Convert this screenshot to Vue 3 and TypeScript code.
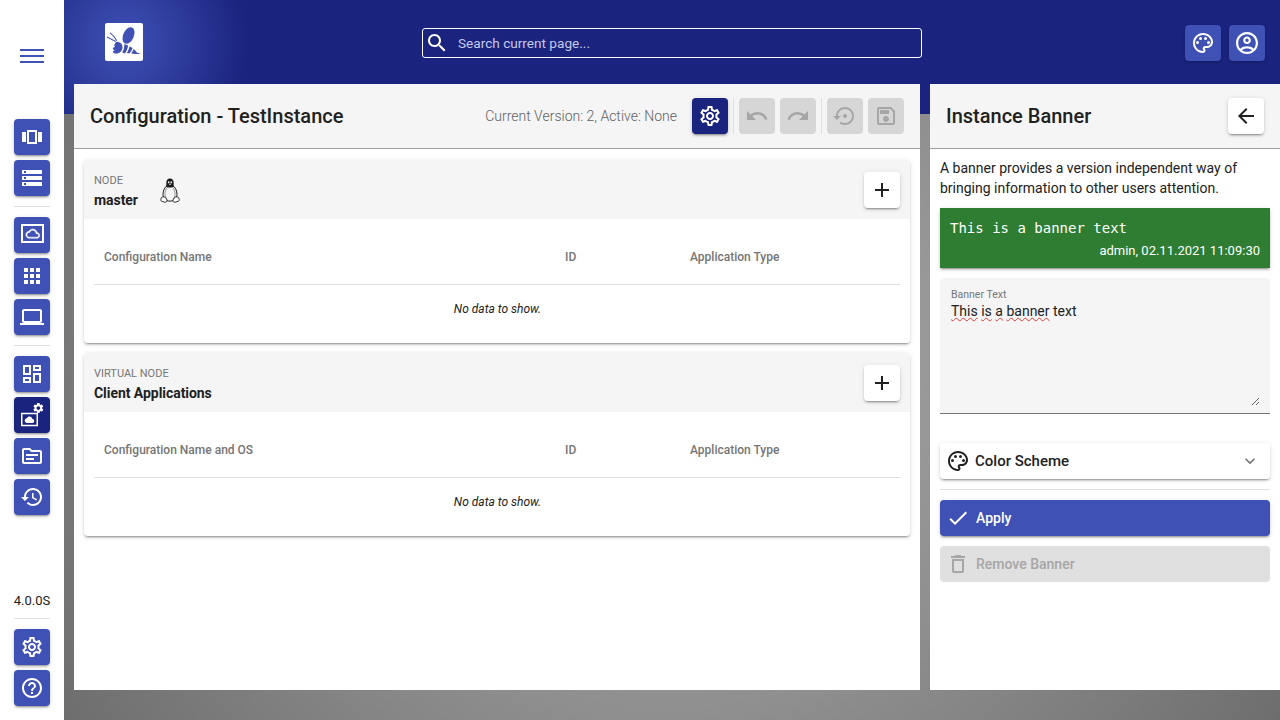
<script setup lang="ts">
import { h } from 'vue';

type Glyph = { d: string; t?: string; s?: number }[];

const Ico = (props: { g: Glyph; size?: number }) =>
  h(
    'svg',
    { viewBox: '0 0 24 24', width: props.size ?? 24, height: props.size ?? 24, fill: 'currentColor', style: 'display:block;flex:none' },
    props.g.map((p) => h('path', { d: p.d, transform: p.t, stroke: p.s ? 'currentColor' : undefined, 'stroke-width': p.s }))
  );
Ico.props = ['g', 'size'];

const gearD =
  'M19.43 12.98c.04-.32.07-.64.07-.98 0-.34-.03-.66-.07-.98l2.11-1.65c.19-.15.24-.42.12-.64l-2-3.46c-.09-.16-.26-.25-.44-.25-.06 0-.12.01-.17.03l-2.49 1c-.52-.4-1.08-.73-1.69-.98l-.38-2.65C14.46 2.18 14.25 2 14 2h-4c-.25 0-.46.18-.49.42l-.38 2.65c-.61.25-1.17.59-1.69.98l-2.49-1c-.06-.02-.12-.03-.18-.03-.17 0-.34.09-.43.25l-2 3.46c-.13.22-.07.49.12.64l2.11 1.65c-.04.32-.07.65-.07.98 0 .33.03.66.07.98l-2.11 1.65c-.19.15-.24.42-.12.64l2 3.46c.09.16.26.25.44.25.06 0 .12-.01.17-.03l2.49-1c.52.4 1.08.73 1.69.98l.38 2.65c.03.24.24.42.49.42h4c.25 0 .46-.18.49-.42l.38-2.65c.61-.25 1.17-.59 1.69-.98l2.49 1c.06.02.12.03.18.03.17 0 .34-.09.43-.25l2-3.46c.12-.22.07-.49-.12-.64l-2.11-1.65zm-1.98-1.71c.04.31.05.52.05.73 0 .21-.02.43-.05.73l-.14 1.13.89.7 1.08.84-.7 1.21-1.27-.51-1.04-.42-.9.68c-.43.32-.84.56-1.25.73l-1.06.43-.16 1.13-.2 1.35h-1.4l-.19-1.35-.16-1.13-1.06-.43c-.43-.18-.83-.41-1.23-.71l-.91-.7-1.06.43-1.27.51-.7-1.21 1.08-.84.89-.7-.14-1.13c-.03-.31-.05-.54-.05-.74s.02-.43.05-.73l.14-1.13-.89-.7-1.08-.84.7-1.21 1.27.51 1.04.42.9-.68c.43-.32.84-.56 1.25-.73l1.06-.43.16-1.13.2-1.35h1.39l.19 1.35.16 1.13 1.06.43c.43.18.83.41 1.23.71l.91.7 1.06-.43 1.27-.51.7 1.21-1.07.85-.89.7.14 1.13zM12 8c-2.21 0-4 1.79-4 4s1.79 4 4 4 4-1.79 4-4-1.79-4-4-4zm0 6c-1.1 0-2-.9-2-2s.9-2 2-2 2 .9 2 2-.9 2-2 2z';
const gearSolid =
  'M19.14 12.94c.04-.3.06-.61.06-.94 0-.32-.02-.64-.07-.94l2.03-1.58c.18-.14.23-.41.12-.61l-1.92-3.32c-.12-.22-.37-.29-.59-.22l-2.39.96c-.5-.38-1.03-.7-1.62-.94l-.36-2.54c-.04-.24-.24-.41-.48-.41h-3.84c-.24 0-.43.17-.47.41l-.36 2.54c-.59.24-1.13.57-1.62.94l-2.39-.96c-.22-.08-.47 0-.59.22L2.74 8.87c-.12.21-.08.47.12.61l2.03 1.58c-.05.3-.09.63-.09.94s.02.64.07.94l-2.03 1.58c-.18.14-.23.41-.12.61l1.92 3.32c.12.22.37.29.59.22l2.39-.96c.5.38 1.03.7 1.62.94l.36 2.54c.05.24.24.41.48.41h3.84c.24 0 .44-.17.47-.41l.36-2.54c.59-.24 1.13-.56 1.62-.94l2.39.96c.22.08.47 0 .59-.22l1.92-3.32c.12-.22.07-.47-.12-.61l-2.01-1.58zM12 15.6c-1.98 0-3.6-1.62-3.6-3.6s1.62-3.6 3.6-3.6 3.6 1.62 3.6 3.6-1.62 3.6-3.6 3.6z';
const cloudOutline =
  'M19.35 10.04C18.67 6.59 15.64 4 12 4 9.11 4 6.6 5.64 5.35 8.04 2.34 8.36 0 10.91 0 14c0 3.31 2.69 6 6 6h13c2.76 0 5-2.24 5-5 0-2.64-2.05-4.78-4.65-4.96zM19 18H6c-2.21 0-4-1.79-4-4s1.79-4 4-4h.71C7.37 7.69 9.48 6 12 6c3.04 0 5.5 2.46 5.5 5.5v.5H19c1.66 0 3 1.34 3 3s-1.34 3-3 3z';
const cloudFill =
  'M19.35 10.04C18.67 6.59 15.64 4 12 4 9.11 4 6.6 5.64 5.35 8.04 2.34 8.36 0 10.91 0 14c0 3.31 2.69 6 6 6h13c2.76 0 5-2.24 5-5 0-2.64-2.05-4.78-4.65-4.96z';
const paletteD =
  'M12 22C6.49 22 2 17.51 2 12S6.49 2 12 2s10 4.04 10 9c0 3.31-2.69 6-6 6h-1.77c-.28 0-.5.22-.5.5 0 .12.05.23.13.33.41.47.64 1.06.64 1.67 0 1.38-1.12 2.5-2.5 2.5zm0-18c-4.41 0-8 3.59-8 8s3.59 8 8 8c.28 0 .5-.22.5-.5 0-.16-.08-.28-.14-.35-.41-.46-.63-1.05-.63-1.65 0-1.38 1.12-2.5 2.5-2.5H16c2.21 0 4-1.79 4-4 0-3.86-3.59-7-8-7zM5 11.5a1.5 1.5 0 1 0 3 0a1.5 1.5 0 1 0-3 0zM8 7.5a1.5 1.5 0 1 0 3 0a1.5 1.5 0 1 0-3 0zM13 7.5a1.5 1.5 0 1 0 3 0a1.5 1.5 0 1 0-3 0zM16 11.5a1.5 1.5 0 1 0 3 0a1.5 1.5 0 1 0-3 0z';

const icons: Record<string, Glyph> = {
  carousel: [{ d: 'M2 7h4v10H2V7zm5 12h10V5H7v14zM9 7h6v10H9V7zm9 0h4v10h-4V7z' }],
  storage: [{ d: 'M2 20h20v-4H2v4zm2-3h2v2H4v-2zM2 4v4h20V4H2zm4 3H4V5h2v2zm-4 7h20v-4H2v4zm2-3h2v2H4v-2z' }],
  cloudBox: [
    { d: 'M1 1h23v19H1V1zm2 2v15h19V3H3z' },
    { d: cloudOutline, t: 'translate(5.8 3.7) scale(.58)', s: 0.8 }
  ],
  apps: [{ d: 'M4 8h4V4H4v4zm6 12h4v-4h-4v4zm-6 0h4v-4H4v4zm0-6h4v-4H4v4zm6 0h4v-4h-4v4zm6-10v4h4V4h-4zm-6 4h4V4h-4v4zm6 6h4v-4h-4v4zm0 6h4v-4h-4v4z' }],
  laptop: [{ d: 'M20 18c1.1 0 1.99-.9 1.99-2L22 6c0-1.1-.9-2-2-2H4c-1.1 0-2 .9-2 2v10c0 1.1.9 2 2 2H0v2h24v-2h-4zM4 6h16v10H4V6z' }],
  dashboard: [{ d: 'M19 5v2h-4V5h4M9 5v6H5V5h4m10 8v6h-4v-6h4M9 17v2H5v-2h4M21 3h-8v6h8V3zM11 3H3v10h8V3zm10 8h-8v10h8V11zm-10 4H3v6h8v-6z' }],
  config: [
    { d: 'M1 9.7h17v13.5H1V9.700zm1.500 1.500v10.500h14V11.200h-14z' },
    { d: cloudFill, t: 'translate(4.700 12) scale(.4)' },
    { d: gearSolid, t: 'translate(12.100 -1.200) scale(.52)' }
  ],
  topic: [{ d: 'M20 6h-8l-2-2H4c-1.1 0-2 .9-2 2v12c0 1.1.9 2 2 2h16c1.1 0 2-.9 2-2V8c0-1.1-.9-2-2-2zm0 12H4V6h5.170l2 2H20v10zm-6-2H6v-2h8v2zm4-4H6v-2h12v2z' }],
  history: [{ d: 'M13 3c-4.970 0-9 4.030-9 9H1l3.890 3.890.07.14L9 12H6c0-3.870 3.130-7 7-7s7 3.130 7 7-3.130 7-7 7c-1.930 0-3.680-.79-4.940-2.060l-1.420 1.420C8.270 19.990 10.510 21 13 21c4.970 0 9-4.030 9-9s-4.030-9-9-9zm-1 5v5l4.280 2.540.72-1.210-3.500-2.080V8H12z' }],
  gear: [{ d: gearD }],
  help: [{ d: 'M11 18h2v-2h-2v2zm1-16C6.480 2 2 6.480 2 12s4.480 10 10 10 10-4.480 10-10S17.520 2 12 2zm0 18c-4.410 0-8-3.590-8-8s3.590-8 8-8 8 3.590 8 8-3.590 8-8 8zm0-14c-2.210 0-4 1.790-4 4h2c0-1.100.9-2 2-2s2 .9 2 2c0 2-3 1.750-3 5h2c0-2.250 3-2.500 3-5 0-2.210-1.790-4-4-4z' }],
  palette: [{ d: paletteD }],
  account: [
    { d: 'M12 2C6.480 2 2 6.480 2 12s4.480 10 10 10 10-4.480 10-10S17.520 2 12 2zM7.350 18.500C8.660 17.560 10.260 17 12 17s3.340.56 4.650 1.500c-1.310.94-2.910 1.500-4.650 1.500s-3.340-.56-4.650-1.500zm10.790-1.380C16.450 15.800 14.320 15 12 15s-4.450.8-6.140 2.120C4.700 15.730 4 13.950 4 12c0-4.420 3.580-8 8-8s8 3.580 8 8c0 1.950-.7 3.730-1.860 5.120z', t: 'translate(-1.200 -1.200) scale(1.1)' },
    { d: 'M12 6c-1.930 0-3.500 1.570-3.500 3.500S10.070 13 12 13s3.500-1.570 3.500-3.500S13.930 6 12 6zm0 5c-.83 0-1.500-.67-1.500-1.500S11.170 8 12 8s1.500.67 1.500 1.500S12.830 11 12 11z', t: 'translate(-1.200 -1.200) scale(1.1)' }
  ],
  undo: [{ d: 'M12.500 8c-2.650 0-5.050.99-6.900 2.600L2 7v9h9l-3.620-3.620c1.390-1.160 3.160-1.880 5.120-1.880 3.540 0 6.550 2.310 7.600 5.500l2.370-.78C21.080 11.030 17.150 8 12.500 8z' }],
  redo: [{ d: 'M18.400 10.600C16.550 8.990 14.150 8 11.500 8c-4.650 0-8.580 3.030-9.960 7.220L3.900 16c1.050-3.190 4.050-5.500 7.600-5.500 1.950 0 3.730.72 5.120 1.880L13 16h9V7l-3.600 3.600z' }],
  restore: [{ d: 'M14 12c0-1.100-.9-2-2-2s-2 .9-2 2 .9 2 2 2 2-.9 2-2zm-2-9c-4.970 0-9 4.030-9 9H0l4 4 4-4H5c0-3.870 3.130-7 7-7s7 3.130 7 7-3.130 7-7 7c-1.510 0-2.910-.49-4.060-1.300l-1.420 1.440C8.040 20.300 9.940 21 12 21c4.970 0 9-4.030 9-9s-4.030-9-9-9z' }],
  save: [{ d: 'M17 3H5c-1.110 0-2 .9-2 2v14c0 1.100.89 2 2 2h14c1.100 0 2-.9 2-2V7l-4-4zm2 16H5V5h11.170L19 7.830V19zm-7-7c-1.660 0-3 1.340-3 3s1.340 3 3 3 3-1.340 3-3-1.340-3-3-3zM6 6h9v4H6z' }],
  add: [{ d: 'M19 13h-6v6h-2v-6H5v-2h6V5h2v6h6v2z' }],
  back: [{ d: 'M20 11H7.830l5.590-5.590L12 4l-8 8 8 8 1.410-1.410L7.830 13H20v-2z' }],
  search: [{ d: 'M15.500 14h-.79l-.28-.27C15.410 12.590 16 11.110 16 9.500 16 5.910 13.090 3 9.500 3S3 5.910 3 9.500 5.910 16 9.500 16c1.610 0 3.090-.59 4.230-1.570l.27.28v.79l5 4.990L20.490 19l-4.990-5zm-6 0C7.010 14 5 11.990 5 9.500S7.010 5 9.500 5 14 7.010 14 9.500 11.990 14 9.500 14z' }],
  check: [{ d: 'M9 16.170L4.830 12l-1.420 1.410L9 19 21 7l-1.410-1.410z' }],
  trash: [{ d: 'M6 19c0 1.100.9 2 2 2h8c1.100 0 2-.9 2-2V7H6v12zM8 9h8v10H8V9zm7.500-5l-1-1h-5l-1 1H5v2h14V4z' }],
  chevron: [{ d: 'M16.590 8.590L12 13.170 7.410 8.590 6 10l6 6 6-6z' }]
};

const navGroups: { icon: string; active?: boolean }[][] = [
  [{ icon: 'carousel' }, { icon: 'storage' }],
  [{ icon: 'cloudBox' }, { icon: 'apps' }, { icon: 'laptop' }],
  [{ icon: 'dashboard' }, { icon: 'config', active: true }, { icon: 'topic' }, { icon: 'history' }]
];

const nodes = [
  { kind: 'Node', name: 'master', first: 'Configuration Name', tux: true },
  { kind: 'Virtual Node', name: 'Client Applications', first: 'Configuration Name and OS', tux: false }
];
</script>

<template>
  <div class="app">
    <aside class="sidebar">
      <button class="burger" aria-label="Menu"><span></span><span></span><span></span></button>
      <template v-for="(group, i) in navGroups" :key="i">
        <hr v-if="i > 0" class="rule" />
        <div class="nav-group">
          <button v-for="item in group" :key="item.icon" class="btn" :class="{ dark: item.active }">
            <Ico :g="icons[item.icon]" />
          </button>
        </div>
      </template>
      <div class="version">4.0.0S</div>
      <hr class="rule" />
      <div class="nav-group">
        <button class="btn"><Ico :g="icons.gear" /></button>
        <button class="btn"><Ico :g="icons.help" /></button>
      </div>
    </aside>

    <div class="main">
      <header class="topbar">
        <div class="logo">
          <svg width="38" height="38" viewBox="0 0 38 38" fill="#3f51b5">
            <ellipse cx="23.500" cy="12.500" rx="5.300" ry="8.800" transform="rotate(24 23.500 12.500)" />
            <path d="M12.500 18.800c3.200.4 5 2.700 5 5.400 0 3.300-2.600 6.300-6.500 6.300-1.700 0-3-.8-3-1.800 0-.8.9-1.300 2-1.500-1.300-.2-2.200-.8-2.200-1.600 0-.9 1-1.400 2.300-1.600-.8-.5-1-1.200-.7-2 .5-1.600 1.300-3.300 3.100-3.200z" />
            <path d="M19.200 21.300c1.600.3 2.900.8 3.900 1.300-.4 3-1.500 5.800-3.200 7.800-1-.2-1.900-.6-2.700-1.100 1.600-2.300 2.400-5 2-8z" />
            <path d="M24.500 23.300c1.200.6 2.200 1.200 3 1.800-.6 1.900-1.500 3.700-2.900 5.200-.9 0-1.900-.1-2.800-.3 1.400-2 2.300-4.200 2.700-6.700z" />
            <path d="M28.700 26c1.400 1.200 2.400 2.500 3 3.500l4 1.400-5.200.1c-1.500 0-2.900-.2-4.300-.5 1.100-1.300 1.900-2.900 2.500-4.500z" />
            <path d="M2 13.500l8.500 4.300.6 1.300-1.400-.5L1.700 14.400z" />
            <path d="M5.200 9.500c2.500 1.800 5.100 4.500 6.900 8l-.9.5c-1.500-3.200-4-6-6.600-7.800z" />
          </svg>
        </div>
        <label class="search">
          <Ico :g="icons.search" />
          <input type="text" placeholder="Search current page..." />
        </label>
        <div class="top-actions">
          <button class="btn flat"><Ico :g="icons.palette" /></button>
          <button class="btn flat"><Ico :g="icons.account" /></button>
        </div>
      </header>

      <div class="panels">
        <section class="panel config">
          <div class="panel-head">
            <h1>Configuration - TestInstance</h1>
            <span class="version-info">Current Version: 2, Active: None</span>
            <div class="tools">
              <button class="btn dark"><Ico :g="icons.gear" /></button>
              <i class="tool-sep"></i>
              <button class="btn off"><Ico :g="icons.undo" /></button>
              <button class="btn off"><Ico :g="icons.redo" /></button>
              <i class="tool-sep"></i>
              <button class="btn off"><Ico :g="icons.restore" /></button>
              <button class="btn off"><Ico :g="icons.save" /></button>
            </div>
          </div>
          <div class="cards">
            <article v-for="node in nodes" :key="node.name" class="card">
              <div class="card-head">
                <div class="card-title">
                  <span class="kind">{{ node.kind }}</span>
                  <strong>{{ node.name }}</strong>
                </div>
                <svg v-if="node.tux" class="tux" width="20" height="26" viewBox="0 0 20 26">
                  <path d="M10 .6c-2.500 0-3.700 1.900-3.700 4.100 0 1.600.3 2.600-.5 3.900 1 1.300 7.400 1.300 8.400 0-.8-1.300-.5-2.300-.5-3.900C13.700 2.500 12.500.6 10 .6z" fill="#1c1c1c" />
                  <ellipse cx="8.700" cy="4.200" rx=".8" ry="1" fill="#fff" />
                  <ellipse cx="11.300" cy="4.200" rx=".8" ry="1" fill="#fff" />
                  <path d="M8.500 5.700h3l-1.500 1.300z" fill="#fff" />
                  <path d="M5.800 8.600C4.400 10.600 3 13 3 16.200c0 1.100.2 2.100.7 3M14.200 8.600c1.400 2 2.800 4.400 2.800 7.600 0 1.100-.2 2.100-.7 3M6.800 22.600c2 .7 4.400.7 6.400 0" fill="none" stroke="#1c1c1c" stroke-width="1" />
                  <path d="M7.200 9.500C5.700 11.500 5 13.800 5 16c0 2.200.7 4.200 2 6M12.800 9.500c1.500 2 2.200 4.300 2.200 6.500 0 2.200-.7 4.200-2 6" fill="none" stroke="#555" stroke-width=".6" />
                  <path d="M3.700 18.800c1.600.2 3.100 1.800 3.300 3.600.2 1.500-1.500 2.300-3 1.600L1.400 23c-.7-.3-.9-.9-.6-1.500.4-.9.500-2.100 1.300-2.500.5-.2 1.100-.3 1.600-.2zM16.300 18.800c-1.600.2-3.100 1.800-3.300 3.600-.2 1.500 1.500 2.300 3 1.600l2.600-1c.7-.3.9-.9.6-1.500-.4-.9-.5-2.100-1.300-2.500-.5-.2-1.100-.3-1.600-.2z" fill="#fff" stroke="#1c1c1c" stroke-width=".9" />
                </svg>
                <button class="btn white add"><Ico :g="icons.add" /></button>
              </div>
              <div class="card-body">
                <div class="grid-head">
                  <span>{{ node.first }}</span>
                  <span>ID</span>
                  <span>Application Type</span>
                </div>
                <div class="no-data">No data to show.</div>
              </div>
            </article>
          </div>
        </section>

        <section class="panel banner-panel">
          <div class="panel-head">
            <h1>Instance Banner</h1>
            <button class="btn white back"><Ico :g="icons.back" /></button>
          </div>
          <div class="banner-body">
            <p class="intro">A banner provides a version independent way of bringing information to other users attention.</p>
            <div class="banner">
              <div class="banner-text">This is a banner text</div>
              <div class="banner-meta">admin, 02.11.2021 11:09:30</div>
            </div>
            <div class="field">
              <div class="field-label">Banner Text</div>
              <div class="field-input"><span class="typo">This</span> <span class="typo">is</span> <span class="typo">a</span> <span class="typo">banner</span> text</div>
            </div>
            <div class="scheme">
              <Ico :g="icons.palette" />
              <span>Color Scheme</span>
              <Ico class="chev" :g="icons.chevron" :size="20" />
            </div>
            <hr class="scheme-rule" />
            <button class="wide primary"><Ico :g="icons.check" /><span>Apply</span></button>
            <button class="wide disabled"><Ico :g="icons.trash" /><span>Remove Banner</span></button>
          </div>
        </section>
      </div>
    </div>
  </div>
</template>

<style scoped>
.app {
  display: flex;
  width: 1280px;
  height: 720px;
  overflow: hidden;
  font-family: Roboto, "Liberation Sans", sans-serif;
  color: #212121;
}

button {
  border: 0;
  padding: 0;
  font: inherit;
}

.sidebar {
  display: flex;
  flex-direction: column;
  align-items: center;
  flex: none;
  width: 64px;
  height: 720px;
  background: #fff;
}

.burger {
  display: flex;
  flex-direction: column;
  gap: 4px;
  width: 24px;
  height: 14px;
  margin: 49px 0 56px;
  background: none;
}

.burger span {
  display: block;
  height: 2px;
  background: #3f51b5;
}

.rule {
  width: 36px;
  height: 1px;
  margin: 10px 0;
  border: 0;
  background: #e0e0e0;
}

.nav-group {
  display: flex;
  flex-direction: column;
  gap: 5px;
}

.version {
  margin-top: auto;
  height: 16px;
  line-height: 18px;
  font-size: 13px;
}

.sidebar > .nav-group:last-child {
  margin-bottom: 14px;
}

.btn {
  display: flex;
  align-items: center;
  justify-content: center;
  flex: none;
  width: 36px;
  height: 36px;
  border-radius: 4px;
  background: #3f51b5;
  color: #fff;
  box-shadow: 0 3px 1px -2px rgba(0, 0, 0, 0.2), 0 2px 2px 0 rgba(0, 0, 0, 0.14), 0 1px 5px 0 rgba(0, 0, 0, 0.12);
}

.btn.dark {
  background: #1a237e;
}

.btn.white {
  background: #fff;
  color: #212121;
}

.btn.flat {
  box-shadow: 0 1px 3px rgba(0, 0, 0, 0.25);
}

.btn.off {
  background: #d6d6d6;
  color: #a6a6a6;
  box-shadow: none;
}

.main {
  flex: 1;
  display: flex;
  flex-direction: column;
  min-width: 0;
  background: radial-gradient(circle at center, #b0b0b0, #6e6e6e);
}

.topbar {
  display: flex;
  align-items: flex-start;
  flex: none;
  height: 114px;
  margin-bottom: -30px;
  padding-left: 41px;
  background: radial-gradient(circle 125px at 60px 42px, #3f51b5, #1a237e);
}

.logo {
  flex: none;
  width: 38px;
  height: 38px;
  margin-top: 23px;
  border-radius: 2px;
  background: #fff;
}

.search {
  display: flex;
  align-items: center;
  flex: none;
  width: 500px;
  height: 30px;
  margin: 28px 0 0 279px;
  padding-left: 2px;
  box-sizing: border-box;
  border: 1px solid #fff;
  border-radius: 3px;
  color: #fff;
}

.search input {
  flex: 1;
  min-width: 0;
  margin-left: 9px;
  padding: 0;
  border: 0;
  outline: 0;
  background: transparent;
  font-family: Roboto, sans-serif;
  font-size: 13.6px;
  color: #fff;
}

.search input::placeholder {
  color: #c5cae9;
  opacity: 1;
}

.top-actions {
  display: flex;
  gap: 8px;
  margin: 25px 15px 0 auto;
}

.panels {
  display: flex;
  gap: 10px;
  flex: 1;
  min-height: 0;
  padding: 0 0 30px 10px;
}

.panel {
  position: relative;
  display: flex;
  flex-direction: column;
  background: #fff;
}

.config {
  flex: 1;
  min-width: 0;
}

.banner-panel {
  flex: none;
  width: 350px;
}

.panel-head {
  display: flex;
  align-items: center;
  flex: none;
  height: 64px;
  padding: 0 16px;
  background: #f5f5f5;
  border-bottom: 1px solid #9e9e9e;
}

.panel-head h1 {
  margin: 0;
  font-size: 20px;
  font-weight: 500;
  line-height: 32px;
}

.version-info {
  margin: 0 15px 0 auto;
  font-size: 14px;
  font-weight: 300;
  color: #616161;
}

.tools {
  display: flex;
  align-items: center;
  gap: 5px;
}

.tool-sep {
  display: block;
  width: 1px;
  height: 36px;
  background: #e0e0e0;
}

.back {
  margin-left: auto;
}

.cards {
  display: flex;
  flex-direction: column;
  gap: 10px;
  padding: 11px 10px 0;
}

.card {
  border-radius: 4px;
  background: #fff;
  box-shadow: 0 3px 1px -2px rgba(0, 0, 0, 0.2), 0 2px 2px 0 rgba(0, 0, 0, 0.14), 0 1px 5px 0 rgba(0, 0, 0, 0.12);
}

.card-head {
  display: flex;
  align-items: flex-start;
  height: 59px;
  box-sizing: border-box;
  padding: 12px 10px 0;
  border-radius: 4px 4px 0 0;
  background: #f5f5f5;
}

.card-title {
  display: flex;
  flex-direction: column;
  padding-top: 2px;
}

.kind {
  font-size: 11px;
  line-height: 14px;
  color: #757575;
  text-transform: uppercase;
}

.card-title strong {
  margin-top: 2px;
  font-size: 14px;
  font-weight: 700;
  line-height: 20px;
  letter-spacing: -0.05px;
}

.tux {
  margin: 6px 0 0 22px;
}

.add {
  margin-left: auto;
}

.card-body {
  padding: 10px;
}

.grid-head {
  display: grid;
  grid-template-columns: 461px 125px 1fr;
  align-items: center;
  height: 56px;
  box-sizing: border-box;
  padding-left: 10px;
  border-bottom: 1px solid #e0e0e0;
  font-size: 12px;
  font-weight: 500;
  color: #757575;
}

.no-data {
  height: 48px;
  padding-left: 1px;
  line-height: 48px;
  text-align: center;
  font-size: 12px;
  font-style: italic;
}

.banner-body {
  display: flex;
  flex-direction: column;
  padding: 9px 10px 0;
}

.intro {
  margin: 0;
  font-size: 14px;
  line-height: 20px;
}

.banner {
  height: 60px;
  margin-top: 10px;
  padding: 10px 10px 0;
  box-sizing: border-box;
  background: #2e7d32;
  color: #fff;
  box-shadow: 0 3px 1px -2px rgba(0, 0, 0, 0.2), 0 2px 2px 0 rgba(0, 0, 0, 0.14), 0 1px 5px 0 rgba(0, 0, 0, 0.12);
}

.banner-text {
  font-family: "DejaVu Sans Mono", monospace;
  font-size: 14px;
  line-height: 20px;
}

.banner-meta {
  margin-top: 3px;
  text-align: right;
  font-size: 13px;
  line-height: 20px;
}

.field {
  height: 136px;
  margin-top: 10px;
  padding: 10px 10px 0 11px;
  box-sizing: border-box;
  border-radius: 4px 4px 0 0;
  border-bottom: 1px solid #757575;
  background: #f5f5f5;
}

.field-label {
  height: 13px;
  font-size: 10.5px;
  line-height: 13px;
  color: #757575;
}

.field-input {
  height: 105px;
  overflow: auto;
  resize: vertical;
  font-size: 14px;
  line-height: 20px;
}

.typo {
  text-decoration: underline wavy #e53935 1px;
  text-underline-offset: 1px;
}

.scheme {
  display: flex;
  align-items: center;
  gap: 5px;
  height: 36px;
  margin-top: 29px;
  padding: 0 10px 0 6px;
  border-radius: 4px;
  background: #fff;
  font-size: 15px;
  font-weight: 500;
  box-shadow: 0 3px 1px -2px rgba(0, 0, 0, 0.2), 0 2px 2px 0 rgba(0, 0, 0, 0.14), 0 1px 5px 0 rgba(0, 0, 0, 0.12);
}

.chev {
  margin-left: auto;
  color: #757575;
}

.scheme-rule {
  width: 100%;
  height: 1px;
  margin: 10px 0;
  border: 0;
  background: #e0e0e0;
}

.wide {
  display: flex;
  align-items: center;
  gap: 6px;
  flex: none;
  width: 100%;
  height: 36px;
  padding-left: 6px;
  border-radius: 4px;
  font-size: 14px;
  font-weight: 500;
}

.primary {
  background: #3f51b5;
  color: #fff;
  box-shadow: 0 3px 1px -2px rgba(0, 0, 0, 0.2), 0 2px 2px 0 rgba(0, 0, 0, 0.14), 0 1px 5px 0 rgba(0, 0, 0, 0.12);
}

.disabled {
  margin-top: 10px;
  background: #e0e0e0;
  color: #a6a6a6;
}
</style>

<style>
html,
body {
  margin: 0;
  background: #fff;
}
</style>
